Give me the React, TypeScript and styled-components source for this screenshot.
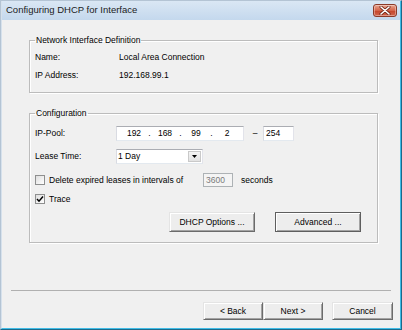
import React from 'react';
import styled, { createGlobalStyle } from 'styled-components';

const GlobalStyle = createGlobalStyle`
  html, body {
    margin: 0;
    padding: 0;
    background: #f0f0f0;
  }
  body {
    font-family: "Liberation Sans", Arial, sans-serif;
    font-size: 8.5px;
    color: #000;
  }
  * {
    box-sizing: border-box;
  }
`;

const CloseIcon = () => (
  <svg width="12" height="9" viewBox="0 0 12 9">
    <path d="M2 1 L10 8 M10 1 L2 8" stroke="#6b2416" strokeWidth="3" strokeLinecap="round" />
    <path d="M2 1 L10 8 M10 1 L2 8" stroke="#ffffff" strokeWidth="1.6" strokeLinecap="round" />
  </svg>
);

const CheckMark = () => (
  <svg width="8" height="8" viewBox="0 0 8 8">
    <path d="M1 4 L3 6.2 L7 1.5" stroke="#000" strokeWidth="1.5" fill="none" />
  </svg>
);

const App = () => {
  return (
    <>
      <GlobalStyle />
      <Frame>
        <Window>
          <TitleBar>
            <Title>Configuring DHCP for Interface</Title>
            <CloseButton>
              <CloseIcon />
            </CloseButton>
          </TitleBar>
          <Client>
            <Group>
              <Legend>Network Interface Definition</Legend>
              <GroupBody>
                <Row>
                  <Label $width={84}>Name:</Label>
                  <span>Local Area Connection</span>
                </Row>
                <Row>
                  <Label $width={84}>IP Address:</Label>
                  <span>192.168.99.1</span>
                </Row>
              </GroupBody>
            </Group>

            <Group $top={15} $bottom={10}>
              <Legend>Configuration</Legend>
              <GroupBody $top={6}>
                <Row>
                  <Label $width={81}>IP-Pool:</Label>
                  <IpBox>
                    <IpField>192</IpField>
                    <IpDot>.</IpDot>
                    <IpField>168</IpField>
                    <IpDot>.</IpDot>
                    <IpField>99</IpField>
                    <IpDot>.</IpDot>
                    <IpField>2</IpField>
                  </IpBox>
                  <Dash>–</Dash>
                  <TextBox $width={31}>254</TextBox>
                </Row>
                <Row $top={5}>
                  <Label $width={81}>Lease Time:</Label>
                  <Combo>
                    <ComboText>1 Day</ComboText>
                    <ComboArrow>
                      <svg width="5" height="3" viewBox="0 0 5 3">
                        <path d="M0 0 H5 L2.5 3 Z" fill="#000" />
                      </svg>
                    </ComboArrow>
                  </Combo>
                </Row>
                <Row $top={6}>
                  <CheckLabel $width={168}>
                    <CheckBox />
                    Delete expired leases in intervals of
                  </CheckLabel>
                  <TextBox $width={30} $disabled>3600</TextBox>
                  <Suffix>seconds</Suffix>
                </Row>
                <Row $top={1}>
                  <CheckLabel>
                    <CheckBox>
                      <CheckMark />
                    </CheckBox>
                    Trace
                  </CheckLabel>
                </Row>
                <ButtonRow>
                  <Button $width={86} $height={20}>DHCP Options ...</Button>
                  <Button $width={86} $height={20} $primary>Advanced ...</Button>
                </ButtonRow>
              </GroupBody>
            </Group>

            <Separator />
            <Footer>
              <Button $width={60}>&lt; Back</Button>
              <Button $width={60}>Next &gt;</Button>
              <CancelButton $width={61}>Cancel</CancelButton>
            </Footer>
          </Client>
        </Window>
      </Frame>
    </>
  );
};

export default App;

const Frame = styled.div`
  width: 402px;
  height: 330px;
  display: flex;
  border: 1px solid;
  border-color: #b4c4d4 #1b6a8c #1b6a8c #b4c4d4;
`;

const Window = styled.div`
  flex: 1;
  min-width: 0;
  display: flex;
  flex-direction: column;
  border-left: 1px solid #d6e1ec;
  border-right: 1px solid #40bce6;
  border-bottom: 1px solid #40bce6;
`;

const TitleBar = styled.div`
  height: 19px;
  display: flex;
  justify-content: space-between;
  align-items: flex-start;
  padding: 3px 3px 0 4px;
  background: linear-gradient(#dae7f4, #c4d8ed);
`;

const Title = styled.div`
  font-size: 9.5px;
  line-height: 12px;
  color: #1b1b1b;
`;

const CloseButton = styled.div`
  width: 24px;
  height: 13px;
  display: flex;
  align-items: center;
  justify-content: center;
  border: 1px solid #8a3a29;
  border-radius: 3px;
  background: linear-gradient(#e8a590, #d4644a 50%, #c5462c 55%, #d0654c);
  box-shadow: inset 0 0 0 1px rgba(255, 255, 255, 0.35);
`;

const Client = styled.div`
  flex: 1;
  display: flex;
  flex-direction: column;
  background: #f0f0f0;
  padding: 15px 0 8px;
`;

const Group = styled.fieldset<{ $top?: number; $bottom?: number }>`
  margin: ${(p) => p.$top ?? 0}px 22px 0 27px;
  padding: 0 0 ${(p) => p.$bottom ?? 8}px;
  min-width: 0;
  border: 1px solid #bcbcbc;
  box-shadow: inset 1px 1px 0 #fff, 1px 1px 0 #fff;
`;

const Legend = styled.legend`
  margin-left: 5px;
  padding: 0 1px;
  line-height: 10px;
  font-size: 8.5px;
`;

const GroupBody = styled.div<{ $top?: number }>`
  display: flex;
  flex-direction: column;
  padding: ${(p) => p.$top ?? 3}px 0 0 5px;
`;

const Row = styled.div<{ $top?: number }>`
  display: flex;
  align-items: center;
  height: 18px;
  margin-top: ${(p) => p.$top ?? 0}px;
`;

const Label = styled.span<{ $width: number }>`
  width: ${(p) => p.$width}px;
  flex-shrink: 0;
`;

const IpBox = styled.div`
  width: 128px;
  height: 15px;
  display: flex;
  align-items: center;
  padding-left: 4px;
  background: #fff;
  border: 1px solid;
  border-color: #abadb3 #e2e3ea #e3e9ef #d9dbe2;
`;

const IpField = styled.span`
  width: 26px;
  text-align: center;
`;

const IpDot = styled.span`
  width: 5px;
  text-align: center;
`;

const Dash = styled.span`
  width: 19px;
  text-align: center;
  padding-left: 3px;
`;

const TextBox = styled.div<{ $width: number; $disabled?: boolean }>`
  width: ${(p) => p.$width}px;
  height: ${(p) => (p.$disabled ? 14 : 15)}px;
  display: flex;
  align-items: center;
  padding-left: 2px;
  background: ${(p) => (p.$disabled ? '#f4f4f4' : '#fff')};
  color: ${(p) => (p.$disabled ? '#7a7a7a' : '#000')};
  border: 1px solid;
  border-color: ${(p) =>
    p.$disabled ? '#adb2b5' : '#abadb3 #e2e3ea #e3e9ef #d9dbe2'};
`;

const Combo = styled.div`
  width: 87px;
  height: 15px;
  display: flex;
  align-items: stretch;
  background: #fff;
  border: 1px solid;
  border-color: #abadb3 #e2e3ea #e3e9ef #d9dbe2;
`;

const ComboText = styled.span`
  flex: 1;
  display: flex;
  align-items: center;
  padding-left: 1px;
`;

const ComboArrow = styled.span`
  width: 13px;
  margin: 1px;
  display: flex;
  align-items: center;
  justify-content: center;
  background: linear-gradient(#f4f4f4, #e2e2e2);
  border: 1px solid #c9c9c9;
`;

const CheckLabel = styled.label<{ $width?: number }>`
  display: flex;
  align-items: center;
  gap: 4px;
  width: ${(p) => (p.$width ? `${p.$width}px` : 'auto')};
  flex-shrink: 0;
`;

const CheckBox = styled.span`
  width: 10px;
  height: 10px;
  display: flex;
  align-items: center;
  justify-content: center;
  border: 1px solid #8e8f8f;
  background: linear-gradient(135deg, #dedede, #ffffff);
`;

const Suffix = styled.span`
  margin-left: 8px;
`;

const ButtonRow = styled.div`
  display: flex;
  justify-content: flex-end;
  gap: 20px;
  margin-top: 4px;
  padding-right: 16px;
`;

const Button = styled.div<{ $width: number; $height?: number; $primary?: boolean }>`
  width: ${(p) => p.$width}px;
  height: ${(p) => p.$height ?? 18}px;
  display: flex;
  align-items: center;
  justify-content: center;
  background: #ededed;
  border: 1px solid;
  border-color: ${(p) => (p.$primary ? '#5e5e5e' : '#e4e4e4 #6b6b6b #6b6b6b #e4e4e4')};
  box-shadow: inset 1px 1px 0 #fff, inset -1px -1px 0 #a3a3a3;
`;

const CancelButton = styled(Button)`
  margin-left: 9px;
`;

const Separator = styled.div`
  margin: auto 9px 0;
  height: 1px;
  background: #b0b0b0;
`;

const Footer = styled.div`
  display: flex;
  justify-content: flex-end;
  margin-top: 11px;
  padding-right: 7px;
`;
